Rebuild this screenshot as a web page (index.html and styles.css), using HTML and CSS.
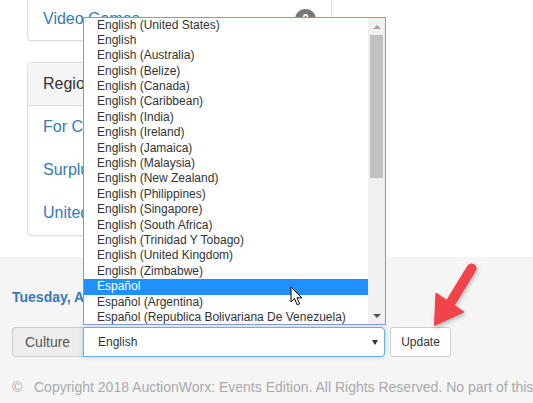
FILE: index.html
```html
<!DOCTYPE html>
<html lang="en">
  <head>
    <meta charset="UTF-8" />
    <meta name="viewport" content="width=device-width, initial-scale=1.0" />
    <title>Culture</title>
    <link rel="stylesheet" href="styles.css">
  </head>
  <body>
    <div class="page">
      <main class="main">
        <div class="panel panel-top">
          <div class="list-item">
            <a href="#">Video Games</a>
            <span class="badge">0</span>
          </div>
        </div>
        <div class="panel">
          <div class="panel-heading">Region</div>
          <a class="list-item" href="#">For Charity</a>
          <a class="list-item" href="#">Surplus</a>
          <a class="list-item" href="#">United States</a>
        </div>
      </main>

      <footer class="footer">
        <div class="date">Tuesday, April 10, 2018</div>
        <div class="culture-row">
          <div class="input-group">
            <span class="addon">Culture</span>
            <div class="select">English<span class="caret"></span></div>
          </div>
          <button type="button" class="btn">Update</button>
        </div>
        <p class="copyright"><span class="copy-sign">&copy;</span>Copyright 2018 AuctionWorx: Events Edition. All Rights Reserved. No part of this</p>
      </footer>
    </div>

    <div class="dropdown">
      <div class="options">
        <div class="opt first">English (United States)</div>
        <div class="opt">English</div>
        <div class="opt">English (Australia)</div>
        <div class="opt">English (Belize)</div>
        <div class="opt">English (Canada)</div>
        <div class="opt">English (Caribbean)</div>
        <div class="opt">English (India)</div>
        <div class="opt">English (Ireland)</div>
        <div class="opt">English (Jamaica)</div>
        <div class="opt">English (Malaysia)</div>
        <div class="opt">English (New Zealand)</div>
        <div class="opt">English (Philippines)</div>
        <div class="opt">English (Singapore)</div>
        <div class="opt">English (South Africa)</div>
        <div class="opt">English (Trinidad Y Tobago)</div>
        <div class="opt">English (United Kingdom)</div>
        <div class="opt">English (Zimbabwe)</div>
        <div class="opt active">Español</div>
        <div class="opt">Español (Argentina)</div>
        <div class="opt">Español (Republica Bolivariana De Venezuela)</div>
      </div>
      <div class="scrollbar">
        <div class="sb-btn"><span class="tri-up"></span></div>
        <div class="thumb"></div>
        <div class="sb-fill"></div>
        <div class="sb-btn"><span class="tri-down"></span></div>
      </div>
    </div>

    <svg class="cursor" width="14" height="21" viewBox="0 0 14 21">
      <path d="M1 1 L1 16 L4.5 12.6 L7.2 18.8 L9.6 17.8 L7 11.8 L11.8 11.8 Z" fill="#fff" stroke="#000" stroke-width="1" stroke-linejoin="miter"/>
    </svg>

    <svg class="red-arrow" width="70" height="80" viewBox="0 0 70 80">
      <g fill="#f2434a" stroke="#f2434a">
        <line x1="51.5" y1="10.5" x2="31" y2="44" stroke-width="10" stroke-linecap="round"/>
        <polygon points="14.5,67.5 16,35 44,54" stroke-width="1" stroke-linejoin="round"/>
      </g>
    </svg>
  </body>
</html>
```

FILE: styles.css
```css
html,
body {
  margin: 0;
  height: 100%;
  overflow: hidden;
}
body {
  font-family: "Liberation Sans", Arial, sans-serif;
  font-size: 14px;
  color: #333;
  background: #fff;
  position: relative;
}
a {
  color: #337ab7;
  text-decoration: none;
}
.page {
  display: flex;
  flex-direction: column;
  height: 403px;
}
.main {
  padding: 0 0 0 27px;
  width: 305px;
}
.panel {
  border: 1px solid #ddd;
  border-radius: 4px;
  background: #fff;
  box-shadow: 0 1px 1px rgba(0, 0, 0, 0.05);
  margin-bottom: 21px;
}
.panel-top {
  margin-top: -2px;
}
.panel-heading {
  background: #f5f5f5;
  border-bottom: 1px solid #ddd;
  border-radius: 3px 3px 0 0;
  padding: 10px 15px;
  line-height: 22px;
  font-size: 16px;
  color: #333;
}
.list-item {
  display: flex;
  justify-content: space-between;
  align-items: center;
  padding: 11px 15px 12px;
  line-height: 20px;
  font-size: 16px;
  color: #337ab7;
}
.panel-top .list-item {
  padding: 10px 15px 11px;
}
.badge {
  background: #777;
  color: #fff;
  font-size: 12px;
  font-weight: bold;
  line-height: 14px;
  padding: 3px 7px;
  border-radius: 10px;
}
.footer {
  flex: 1;
  background: #f5f5f5;
  padding: 30px 0 0 12px;
}
.date {
  font-weight: bold;
  font-size: 14px;
  line-height: 20px;
  color: #337ab7;
}
.culture-row {
  display: flex;
  margin-top: 20px;
  height: 30px;
}
.input-group {
  display: flex;
}
.addon {
  box-sizing: border-box;
  width: 71px;
  background: #eee;
  border: 1px solid #ccc;
  border-right: none;
  border-radius: 4px 0 0 4px;
  padding: 0 12px;
  line-height: 28px;
  font-size: 14px;
  color: #555;
}
.select {
  box-sizing: border-box;
  width: 302px;
  position: relative;
  background: #fff;
  border: 1px solid #66afe9;
  border-radius: 0 4px 4px 0;
  box-shadow: 0 0 5px rgba(102, 175, 233, 0.5);
  padding: 0 14px;
  line-height: 28px;
  font-size: 12px;
  color: #333;
}
.caret {
  position: absolute;
  right: 6px;
  top: 12px;
  border-left: 3.5px solid transparent;
  border-right: 3.5px solid transparent;
  border-top: 5px solid #333;
}
.btn {
  box-sizing: border-box;
  margin-left: 5px;
  width: 61px;
  height: 30px;
  background: #fff;
  border: 1px solid #ccc;
  border-radius: 3px;
  font-family: "Liberation Sans", Arial, sans-serif;
  font-size: 12px;
  color: #333;
  padding: 0;
}
.copyright {
  margin: 20px 0 0;
  line-height: 20px;
  font-size: 14px;
  color: #aaa;
  white-space: nowrap;
}
.copy-sign {
  display: inline-block;
  width: 22px;
}

/* open list of the culture select */
.dropdown {
  position: absolute;
  left: 83px;
  top: 17px;
  width: 303px;
  height: 308px;
  box-sizing: border-box;
  border: 1px solid #7a9cd3;
  background: #fff;
  display: flex;
  overflow: hidden;
}
.options {
  flex: 1;
  overflow: hidden;
}
.opt {
  height: 15.4px;
  line-height: 15.4px;
  padding-left: 13px;
  font-size: 12px;
  color: #333;
  white-space: nowrap;
}
.opt.first {
  margin-top: -0.5px;
}
.opt.active {
  background: #1e90ff;
  color: #fff;
}
.scrollbar {
  width: 17px;
  background: #f0f0f0;
  display: flex;
  flex-direction: column;
}
.sb-btn {
  height: 17px;
  display: flex;
  align-items: center;
  justify-content: center;
}
.tri-up {
  border-left: 4px solid transparent;
  border-right: 4px solid transparent;
  border-bottom: 4px solid #a3a3a3;
}
.tri-down {
  border-left: 4px solid transparent;
  border-right: 4px solid transparent;
  border-top: 4px solid #505050;
}
.thumb {
  height: 143px;
  margin: 0 2px;
  background: #c1c1c1;
}
.sb-fill {
  flex: 1;
}
.cursor {
  position: absolute;
  left: 290px;
  top: 286px;
}
.red-arrow {
  position: absolute;
  left: 420px;
  top: 258px;
  filter: drop-shadow(1px 2px 2px rgba(0, 0, 0, 0.25));
}
```
